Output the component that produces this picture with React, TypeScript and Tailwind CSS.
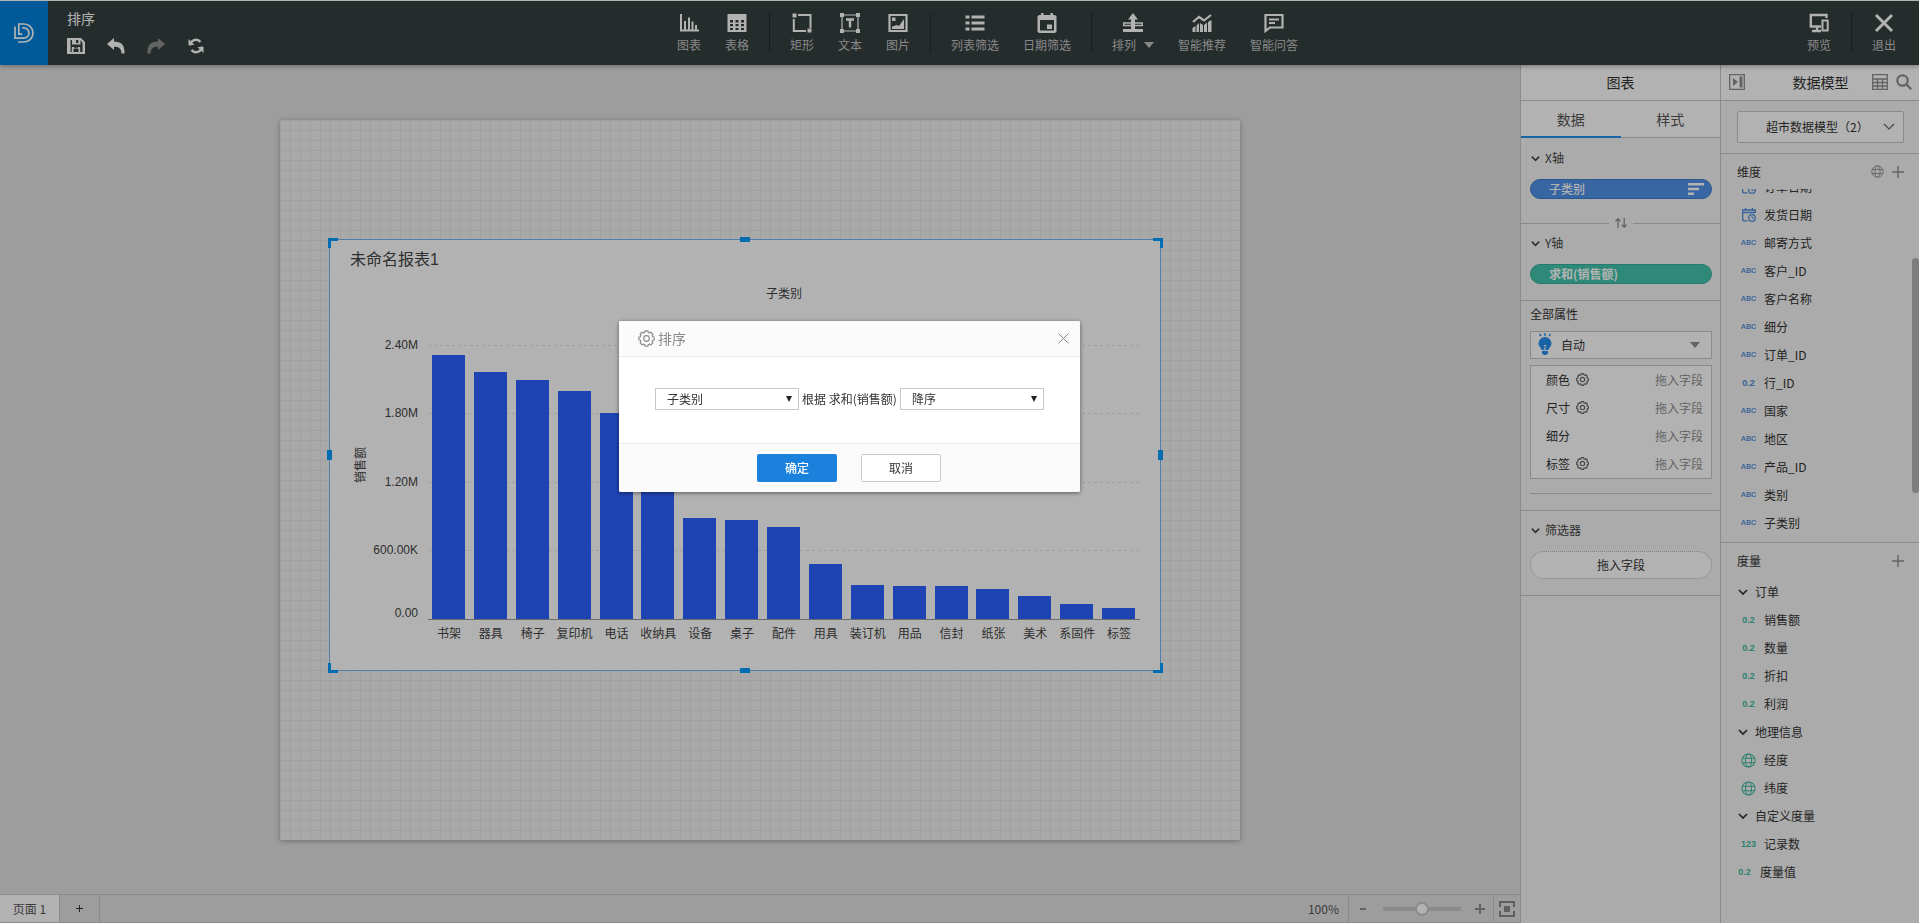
import { useState, type ReactNode } from "react";

const dimensions = [
  { type: "date", label: "订单日期" },
  { type: "date", label: "发货日期" },
  { type: "abc", label: "邮寄方式" },
  { type: "abc", label: "客户_ID" },
  { type: "abc", label: "客户名称" },
  { type: "abc", label: "细分" },
  { type: "abc", label: "订单_ID" },
  { type: "decimal", label: "行_ID" },
  { type: "abc", label: "国家" },
  { type: "abc", label: "地区" },
  { type: "abc", label: "产品_ID" },
  { type: "abc", label: "类别" },
  { type: "abc", label: "子类别" },
];

const measureGroups = [
  {
    title: "订单",
    items: [
      { type: "decimal", label: "销售额" },
      { type: "decimal", label: "数量" },
      { type: "decimal", label: "折扣" },
      { type: "decimal", label: "利润" },
    ],
  },
  {
    title: "地理信息",
    items: [
      { type: "geo", label: "经度" },
      { type: "geo", label: "纬度" },
    ],
  },
  { title: "自定义度量", items: [{ type: "int", label: "记录数" }] },
];

const markFields = [
  { label: "颜色", gear: true },
  { label: "尺寸", gear: true },
  { label: "细分", gear: false },
  { label: "标签", gear: true },
];

/** Bar heights in plot pixels, 600K is 69px. */
const bars = [
  { label: "书架", h: 264 },
  { label: "器具", h: 247 },
  { label: "椅子", h: 239 },
  { label: "复印机", h: 228 },
  { label: "电话", h: 206 },
  { label: "收纳具", h: 170 },
  { label: "设备", h: 101 },
  { label: "桌子", h: 99 },
  { label: "配件", h: 92 },
  { label: "用具", h: 55 },
  { label: "装订机", h: 34 },
  { label: "用品", h: 33 },
  { label: "信封", h: 33 },
  { label: "纸张", h: 30 },
  { label: "美术", h: 23 },
  { label: "系固件", h: 15 },
  { label: "标签", h: 11 },
];

const yTicks = [
  { label: "2.40M", y: 105 },
  { label: "1.80M", y: 173 },
  { label: "1.20M", y: 242 },
  { label: "600.00K", y: 310 },
];

/* eight-toothed gear outline on a 24px grid */
const gearPoints = Array.from({ length: 8 }, (_, i) =>
  [
    [-16, 9],
    [-11, 11],
    [11, 11],
    [16, 9],
  ].map(([deg, r]) => {
    const a = ((i * 45 + deg) * Math.PI) / 180;
    return `${(12 + r * Math.sin(a)).toFixed(2)},${(12 - r * Math.cos(a)).toFixed(2)}`;
  })
)
  .flat()
  .join(" ");

function Gear({ className, thin }: { className: string; thin?: boolean }) {
  return (
    <svg
      className={className}
      viewBox="0 0 24 24"
      fill="none"
      stroke="currentColor"
      strokeWidth={thin ? 1.6 : 2}
      strokeLinejoin="round"
      aria-hidden="true"
    >
      <polygon points={gearPoints} />
      <circle cx="12" cy="12" r="4" />
    </svg>
  );
}

function Chevron({ className }: { className: string }) {
  return (
    <svg className={className} viewBox="0 0 12 12" fill="none" stroke="currentColor" strokeWidth={1.7} aria-hidden="true">
      <path d="M2 4l4 4 4-4" />
    </svg>
  );
}

function Globe({ className }: { className: string }) {
  return (
    <svg className={className} viewBox="0 0 16 16" fill="none" stroke="currentColor" strokeWidth={1.1} aria-hidden="true">
      <circle cx="8" cy="8" r="7" />
      <ellipse cx="8" cy="8" rx="3.2" ry="7" />
      <path d="M1.6 5.5h12.8M1.6 10.5h12.8" />
    </svg>
  );
}

function Plus({ className }: { className: string }) {
  return (
    <svg className={className} viewBox="0 0 12 12" stroke="currentColor" strokeWidth={1.4} aria-hidden="true">
      <path d="M6 0v12M0 6h12" />
    </svg>
  );
}

function ToolIcon({ children }: { children: ReactNode }) {
  return (
    <svg className="size-5 text-white" viewBox="0 0 20 20" fill="none" stroke="currentColor" strokeWidth={2} aria-hidden="true">
      {children}
    </svg>
  );
}

function Tool({ label, caret, children }: { label: string; caret?: boolean; children: ReactNode }) {
  return (
    <button type="button" className="flex flex-col items-center gap-1 px-3 text-xs leading-4 text-[#c4c4c4]">
      <ToolIcon>{children}</ToolIcon>
      <span className="flex items-center gap-2 whitespace-nowrap">
        {label}
        {caret && (
          <svg className="h-1.5 w-2.5" viewBox="0 0 10 6" fill="currentColor" aria-hidden="true">
            <path d="M0 0h10L5 6z" />
          </svg>
        )}
      </span>
    </button>
  );
}

function Divider() {
  return <span className="mx-2 h-10 w-px bg-[#252c2c]" />;
}

function Header() {
  return (
    <header className="relative z-10 flex h-[65px] shrink-0 items-stretch border-t border-white bg-[#363f3f] shadow-[0_1px_5px_rgba(0,0,0,0.35)]">
      <a href="#home" aria-label="首页" className="mr-2 flex w-12 shrink-0 items-center justify-center bg-[#0081dc] text-white">
        <svg className="size-5" viewBox="0 0 20 20" fill="none" stroke="currentColor" strokeWidth={1.7} aria-hidden="true">
          <path d="M1 3.5V15.2h8.8a5.200 5.200 0 0 0 0-10.400H8.2" />
          <path d="M8.2 11.2H4.8V1h5.200a9 9 0 0 1 0 18H4" />
        </svg>
      </a>

      <div className="flex-1 pl-[11px] pt-[7px] text-white">
        <h1 className="text-sm leading-5">排序</h1>
        <div className="mt-[9px] flex items-center gap-[22px]">
          <button type="button" aria-label="保存">
            <svg className="size-[18px]" viewBox="0 0 18 18" fill="currentColor" fillRule="evenodd" aria-hidden="true">
              <path d="M0 1h14l4 4v12H0zM3.5 3v12h1.300v-5h8.400v5h2.300V6L13.5 3v4.600H5V3zM7 10.200v1.300h4v-1.300zM6.5 12v3h5v-3zM9 3h2.300v3H9z" />
            </svg>
          </button>
          <button type="button" aria-label="撤销">
            <svg className="size-[18px]" viewBox="0 0 18 18" fill="currentColor" aria-hidden="true">
              <path d="M0 7l7-6v3.500c7 0 11 3.500 10.500 12h-3C14.5 11.500 12 9.700 7 9.700V13z" />
            </svg>
          </button>
          <button type="button" aria-label="重做" className="text-[#8f8f8f]">
            <svg className="size-[18px]" viewBox="0 0 18 18" fill="currentColor" aria-hidden="true">
              <path d="M18 7l-7-6v3.500C4 4.500 0 8 .5 16.500h3C3.5 11.500 6 9.700 11 9.700V13z" />
            </svg>
          </button>
          <button type="button" aria-label="刷新">
            <svg className="size-[18px]" viewBox="0 0 18 18" fill="none" stroke="currentColor" strokeWidth={2.4} aria-hidden="true">
              <path d="M3.2 8.500A5.800 5.800 0 0 1 13.5 5M14.8 9.500A5.800 5.800 0 0 1 4.5 13" />
              <path d="M1.5 2v6H7.500zM16.500 16v-6H10.500z" fill="currentColor" stroke="none" />
            </svg>
          </button>
        </div>
      </div>

      <nav aria-label="工具栏" className="flex items-center">
        <Tool label="图表">
          <path d="M2 1v16.500h18M6 17V8M10 17V4.500M13.500 17V8.500M17 17v-5" />
        </Tool>
        <Tool label="表格">
          <path
            fill="currentColor"
            fillRule="evenodd"
            stroke="none"
            d="M0.5 1h19v18h-19zM3 7v2.500h3V7zM8.5 7v2.500h3V7zM14 7v2.500h3V7zM3 11v2.300h3V11zM8.5 11v2.300h3V11zM14 11v2.300h3V11zM3 15v2h3v-2zM8.5 15v2h3v-2zM14 15v2h3v-2z"
          />
        </Tool>
        <Divider />
        <Tool label="矩形">
          <path d="M6 2h12.500v13M14 18H1.800V6" />
          <path d="M0.5 0.500h4v4h-4zM15.500 15.500h4v4h-4z" fill="currentColor" stroke="none" />
        </Tool>
        <Tool label="文本">
          <path d="M2 2h16v16H2z" strokeWidth={1.2} />
          <path d="M0 0h4v4H0zM16 0h4v4h-4zM0 16h4v4H0zM16 16h4v4h-4z" fill="currentColor" stroke="none" />
          <path d="M6 6.500h8M10 6v8.500" strokeWidth={2.4} />
        </Tool>
        <Tool label="图片">
          <path d="M1.5 2h17v16h-17z" strokeWidth={2.2} />
          <path d="M4 4.500h3.500V8H4zM4 16v-2.500l5-1.500 2 1 5-7V16z" fill="currentColor" stroke="none" />
        </Tool>
        <Divider />
        <Tool label="列表筛选">
          <path d="M0.5 4h4M6.500 4h13M0.500 10h4M6.500 10h13M0.500 16h4M6.500 16h13" strokeWidth={3} />
        </Tool>
        <Tool label="日期筛选">
          <path
            fill="currentColor"
            fillRule="evenodd"
            stroke="none"
            d="M4 0h2.500v2h7V0H16v2h2l1.500 1.500v15L18 20H2L.5 18.500v-15L2 2h2zM3 7v10.500h14V7zM10 11.500h5v4.500h-5z"
          />
        </Tool>
        <Divider />
        <Tool label="排列" caret>
          <path d="M10 0l5 6.500h-3V16H8V6.500H5zM0 16h20v3H0z" fill="currentColor" stroke="none" />
          <path d="M8 10H.7v2.500H8M12 10h7.300v2.500H12" strokeWidth={1.4} />
        </Tool>
        <Tool label="智能推荐">
          <path d="M1 9l6-5 5 3.500L19 2" strokeWidth={2.2} />
          <path d="M.5 19v-4l3-2v6zM4.5 19v-6.500L7 10v9zM8 19v-9l3 2v7zM12 19v-7l3-2.500V19zM16 19v-10l3.500-2v12z" fill="currentColor" stroke="none" />
        </Tool>
        <Tool label="智能问答">
          <path d="M1.5 2h17v12.500H6L1.5 18z" strokeWidth={2.2} />
          <path d="M5 6.500h10M5 10h6" />
        </Tool>
      </nav>

      <div className="flex flex-1 items-center justify-end pr-[11px]">
        <Tool label="预览">
          <path d="M17.5 5V2H1.800v11.500H12M8 14v4M3 18h9" strokeWidth={2.4} />
          <path d="M13.5 7.500h5.200v10h-5.200z" />
        </Tool>
        <Divider />
        <Tool label="退出">
          <path d="M2 2l16 16M18 2L2 18" strokeWidth={3} />
        </Tool>
      </div>
    </header>
  );
}

function Chart() {
  const step = 712 / bars.length;
  return (
    <svg className="block h-[430px] w-[830px]" viewBox="0 0 830 430" role="img" aria-label="子类别销售额柱状图">
      <g className="fill-[#444] font-['Liberation_Sans','Noto_Sans_CJK_SC',sans-serif] text-[12px]">
        <text x="20" y="25" className="text-[16px]">
          未命名报表1
        </text>
        <text x="454" y="58" textAnchor="middle">
          子类别
        </text>
        {yTicks.map((t) => (
          <g key={t.label}>
            <line x1="98" x2="810" y1={t.y + 0.5} y2={t.y + 0.5} stroke="#e2e2e2" strokeDasharray="3 3" />
            <text x="88" y={t.y + 4} textAnchor="end">
              {t.label}
            </text>
          </g>
        ))}
        <text x="88" y="377" textAnchor="end">
          0.00
        </text>
        <text transform="translate(35 225) rotate(-90)" textAnchor="middle">
          销售额
        </text>
        {bars.map((b, i) => (
          <g key={b.label}>
            <rect
              x={Math.round(98 + i * step + 4)}
              y={379 - b.h}
              width={33}
              height={b.h}
              className="fill-[#2b60ff]"
            />
            <text x={98 + (i + 0.5) * step} y="398" textAnchor="middle">
              {b.label}
            </text>
          </g>
        ))}
      </g>
      <line x1="98" x2="810" y1="379.5" y2="379.5" stroke="#9a9a9a" />
    </svg>
  );
}

function Canvas() {
  return (
    <div className="flex flex-1 items-center justify-center overflow-hidden pt-px">
      <div className="relative h-[720px] w-[960px] shrink-0 bg-[#f3f3f3] bg-[linear-gradient(to_right,#e6e6e6_1px,transparent_1px),linear-gradient(to_bottom,#e6e6e6_1px,transparent_1px)] bg-[size:10px_10px] shadow-[0_1px_5px_rgba(0,0,0,0.3)]">
        <section className="absolute left-[49px] top-[119px] border border-[#74b3f5] bg-white">
          <Chart />
          {/* resize handles */}
          <span className="absolute -left-0.5 -top-0.5 size-2.5 border-l-3 border-t-3 border-[#009dff]" />
          <span className="absolute -right-[3px] -top-0.5 size-2.5 border-r-3 border-t-3 border-[#009dff]" />
          <span className="absolute -bottom-[3px] -left-0.5 size-2.5 border-b-3 border-l-3 border-[#009dff]" />
          <span className="absolute -bottom-[3px] -right-[3px] size-2.5 border-b-3 border-r-3 border-[#009dff]" />
          <span className="absolute -top-[3px] left-1/2 h-[5px] w-2.5 -translate-x-1/2 bg-[#009dff]" />
          <span className="absolute -bottom-[3px] left-1/2 h-[5px] w-2.5 -translate-x-1/2 bg-[#009dff]" />
          <span className="absolute -left-[3px] top-1/2 h-2.5 w-[5px] -translate-y-1/2 bg-[#009dff]" />
          <span className="absolute -right-[3px] top-1/2 h-2.5 w-[5px] -translate-y-1/2 bg-[#009dff]" />
        </section>
      </div>
    </div>
  );
}

function PageBar() {
  const [zoom, setZoom] = useState(100);
  return (
    <footer className="flex h-[29px] shrink-0 items-stretch border-y border-[#c8c8c8] text-xs text-[#555]">
      <button type="button" className="w-[60px] border-r border-[#c8c8c8] bg-white">
        页面 1
      </button>
      <button type="button" aria-label="新增页面" className="flex w-10 items-center justify-center border-r border-[#c8c8c8] text-[#333]">
        <svg className="size-[7px]" viewBox="0 0 7 7" stroke="currentColor" aria-hidden="true">
          <path d="M3.5 0v7M0 3.500h7" />
        </svg>
      </button>
      <span className="ml-auto flex items-center pr-[9px]">{zoom}%</span>
      <div className="flex w-[145px] items-center justify-between border-l border-[#c8c8c8] px-2 text-[#8f8f8f]">
        <button type="button" aria-label="缩小" className="flex size-3 items-center justify-center" onClick={() => setZoom(Math.max(10, zoom - 10))}>
          <span className="h-0.5 w-1.5 bg-[#8f8f8f]" />
        </button>
        <input
          type="range"
          aria-label="缩放"
          min={10}
          max={190}
          value={zoom}
          onChange={(e) => setZoom(Number(e.target.value))}
          className="h-1 w-[78px] appearance-none bg-[#c8c8c8] [&::-webkit-slider-thumb]:size-3.5 [&::-webkit-slider-thumb]:appearance-none [&::-webkit-slider-thumb]:rounded-full [&::-webkit-slider-thumb]:border-2 [&::-webkit-slider-thumb]:border-[#c8c8c8] [&::-webkit-slider-thumb]:bg-white"
        />
        <button type="button" aria-label="放大" onClick={() => setZoom(Math.min(190, zoom + 10))}>
          <svg className="size-2.5" viewBox="0 0 10 10" stroke="currentColor" strokeWidth={2} aria-hidden="true">
            <path d="M5 0v10M0 5h10" />
          </svg>
        </button>
      </div>
      <button type="button" aria-label="适应屏幕" className="flex w-[27px] items-center justify-center border-l border-[#c8c8c8] text-[#8a8a8a]">
        <svg className="size-4" viewBox="0 0 16 16" fill="none" stroke="currentColor" strokeWidth={2} aria-hidden="true">
          <path d="M1 6V1h14v5M1 10v5h14v-5" />
          <path d="M5 5h6v6H5z" fill="currentColor" stroke="none" />
        </svg>
      </button>
    </footer>
  );
}

function SectionLabel({ children }: { children: ReactNode }) {
  return (
    <button type="button" className="flex h-5 items-center gap-1 text-xs text-[#444]">
      <Chevron className="size-[11px]" />
      {children}
    </button>
  );
}

function ChartPanel() {
  return (
    <aside className="w-[200px] shrink-0 border-l border-[#c8c8c8] bg-[#f5f5f5] text-xs text-[#333]">
      <h2 className="flex h-9 items-center justify-center border-b border-[#c8c8c8] bg-white pb-px text-sm">图表</h2>
      <div className="flex h-[37px] border-b border-[#c8c8c8] bg-white text-sm text-[#555]">
        <button type="button" className="-mb-px flex-1 border-b-2 border-[#258ff0]">
          数据
        </button>
        <button type="button" className="flex-1 border-b border-transparent">
          样式
        </button>
      </div>

      <div className="border-b border-[#c8c8c8] pb-4 pt-2.5">
        <div className="pl-[9px] pr-2">
          <SectionLabel>X轴</SectionLabel>
          <div className="mt-[11px] flex h-5 items-center justify-between rounded-full border border-[#3f7fd0] bg-[#4f92e9] pl-[18px] pr-[7px] font-medium text-white">
            子类别
            <svg className="h-3 w-4" viewBox="0 0 16 12" stroke="currentColor" strokeWidth={2.6} aria-hidden="true">
              <path d="M0 1.300h16M0 6h11M0 10.700h6" />
            </svg>
          </div>
        </div>
        <div className="mt-4 flex h-4 items-center gap-1.5">
          <span className="h-px flex-1 bg-[#c8c8c8]" />
          <button type="button" aria-label="交换坐标轴" className="text-[#8f8f8f]">
            <svg className="h-2.5 w-3" viewBox="0 0 12 10" fill="none" stroke="currentColor" strokeWidth={1.3} aria-hidden="true">
              <path d="M3 10V.8M.5 3.300L3 .8l2.500 2.500M9.200 0v9.200M6.700 6.700l2.500 2.500 2.500-2.500" />
            </svg>
          </button>
          <span className="h-px flex-1 bg-[#c8c8c8]" />
        </div>
        <div className="mt-0.5 pl-[9px] pr-2">
          <SectionLabel>Y轴</SectionLabel>
          <div className="mt-[11px] flex h-5 items-center rounded-full border border-[#38b09b] bg-[#42c4ad] pl-[18px] font-bold text-white">
            求和(销售额)
          </div>
        </div>
      </div>

      <div className="border-b border-[#c8c8c8] pb-4 pl-[9px] pr-2 pt-[3px]">
        <label htmlFor="mark-type" className="block leading-5">
          全部属性
        </label>
        <div className="relative mt-[7px]">
          <svg className="pointer-events-none absolute left-2 top-0.5 h-[22px] w-3.5 text-[#258ff0]" viewBox="0 0 14 22" fill="currentColor" aria-hidden="true">
            <path d="M7 4a6.500 6.500 0 0 1 6.500 6.500c0 3-2.800 4-3 6.500h-7c-.2-2.500-3-3.500-3-6.500A6.500 6.500 0 0 1 7 4zM4 18h6v3H8.500v1h-3v-1H4z" />
            <path d="M7 0v3M1.500 1l1.500 2M12.500 1L11 3" stroke="currentColor" strokeWidth={1.4} />
            <path d="M7 17v-3.500M5.800 12.500h2.400" stroke="#fff" strokeWidth={1} />
          </svg>
          <select id="mark-type" className="block h-7 w-full appearance-none border border-[#c8c8c8] bg-white pl-[30px]">
            <option>自动</option>
          </select>
          <svg className="pointer-events-none absolute right-3 top-[11px] h-1.5 w-2.5 text-[#8f8f8f]" viewBox="0 0 10 6" fill="currentColor" aria-hidden="true">
            <path d="M0 0h10L5 6z" />
          </svg>
        </div>
        <ul className="mt-1.5 border border-[#c8c8c8] bg-white">
          {markFields.map((f) => (
            <li key={f.label} className="flex h-7 items-center pb-px pl-[15px] pr-2">
              {f.label}
              {f.gear && (
                <button type="button" aria-label={`${f.label}设置`} className="ml-1.5 text-[#666]">
                  <Gear className="size-[13px]" />
                </button>
              )}
              <span className="ml-auto text-[#8f8f8f]">拖入字段</span>
            </li>
          ))}
        </ul>
        <hr className="mt-3.5 border-[#c8c8c8]" />
      </div>

      <div className="border-b border-[#c8c8c8] pb-4 pl-[9px] pr-2 pt-[9px]">
        <SectionLabel>筛选器</SectionLabel>
        <div className="mt-[11px] flex h-7 items-center justify-center rounded-full border border-dotted border-[#b5b5b5] bg-white">
          拖入字段
        </div>
      </div>
    </aside>
  );
}

function FieldIcon({ type }: { type: string }) {
  if (type === "geo") return <Globe className="size-[15px]" />;
  if (type === "date") {
    return (
      <svg className="size-3.5" viewBox="0 0 14 14" fill="none" stroke="currentColor" strokeWidth={1.3} aria-hidden="true">
        <path d="M5.5 12.800H1.500l-.8-.8V2h12.600v3M.7 4.500h12.600M3.500 0v3M10.500 0v3" />
        <circle cx="10" cy="10" r="3.300" />
        <path d="M10 8v2.200h1.800" strokeWidth={1} />
      </svg>
    );
  }
  if (type === "abc") return <span className="font-['Roboto',sans-serif] text-[8px] font-medium">ABC</span>;
  if (type === "int") return <span className="font-['Liberation_Sans',sans-serif] text-[9px] font-bold">123</span>;
  return <span className="font-['Liberation_Sans',sans-serif] text-[9px] font-bold">0.2</span>;
}

function Field({ type, label, measure }: { type: string; label: string; measure?: boolean }) {
  return (
    <li className="flex h-7 items-center gap-1">
      <span className={`flex w-[23px] justify-center ${measure ? "text-[#42b89f]" : "text-[#4f8fdb]"}`}>
        <FieldIcon type={type} />
      </span>
      {label}
    </li>
  );
}

function ModelPanel() {
  return (
    <aside className="w-[199px] shrink-0 border-l border-[#c8c8c8] bg-[#f5f5f5] text-xs text-[#333]">
      <div className="flex h-9 items-center border-b border-[#c8c8c8] bg-white pb-px pl-2 pr-[7px] text-[#8f8f8f]">
        <button type="button" aria-label="收起面板">
          <svg className="size-4" viewBox="0 0 16 16" fill="none" stroke="currentColor" strokeWidth={1.3} aria-hidden="true">
            <path d="M.7.7h14.600v14.600H.7z" />
            <path d="M4 4l5 4-5 4zM10.500 2.500h3v11h-3z" fill="currentColor" stroke="none" />
          </svg>
        </button>
        <h2 className="flex-1 pl-6 text-center text-sm text-[#333]">数据模型</h2>
        <button type="button" aria-label="查看数据" className="mr-2">
          <svg className="size-4" viewBox="0 0 16 16" fill="none" stroke="currentColor" strokeWidth={1.3} aria-hidden="true">
            <path d="M.7.7h14.600v14.600H.7zM.7 5h14.600M.7 8.500h14.600M.7 12h14.600M5.500 5v10M10.500 5v10" />
          </svg>
        </button>
        <button type="button" aria-label="搜索">
          <svg className="size-4" viewBox="0 0 16 16" fill="none" stroke="currentColor" strokeWidth={2.2} aria-hidden="true">
            <circle cx="6.5" cy="6.500" r="5.200" />
            <path d="M10.3 10.300l5 5" />
          </svg>
        </button>
      </div>

      <div className="relative border-b border-[#c8c8c8] pb-2.5 pl-4 pr-[15px] pt-2.5">
        <select aria-label="数据模型" className="block h-8 w-full appearance-none rounded-xs border border-[#c8c8c8] bg-white pl-7">
          <option>超市数据模型（2）</option>
        </select>
        <svg className="pointer-events-none absolute right-6 top-[22px] h-2 w-3 text-[#666]" viewBox="0 0 12 8" fill="none" stroke="currentColor" strokeWidth={1.2} aria-hidden="true">
          <path d="M1 1l5 5 5-5" />
        </svg>
      </div>

      <section className="relative h-[389px] overflow-hidden border-b border-[#c8c8c8]">
        <div className="flex h-[35px] items-center gap-2 pl-4 pr-[15px] text-[#8f8f8f]">
          <h3 className="mr-auto text-[#333]">维度</h3>
          <Globe className="size-[13px]" />
          <button type="button" aria-label="新增维度">
            <Plus className="size-3" />
          </button>
        </div>
        <div className="overflow-hidden">
          <ul className="-mt-4 pl-4">
            {dimensions.map((d) => (
              <Field key={d.label} {...d} />
            ))}
          </ul>
        </div>
        {/* list scrollbar */}
        <span className="absolute right-0 top-[104px] h-[235px] w-[7px] rounded-full bg-[#b4b4b4]" />
      </section>

      <section>
        <div className="flex h-[35px] items-center justify-between pl-4 pr-[15px] text-[#8f8f8f]">
          <h3 className="text-[#333]">度量</h3>
          <button type="button" aria-label="新增度量">
            <Plus className="size-3" />
          </button>
        </div>
        {measureGroups.map((g) => (
          <div key={g.title} className="pl-4">
            <button type="button" className="flex h-7 items-center gap-1.5">
              <Chevron className="size-3" />
              {g.title}
            </button>
            <ul>
              {g.items.map((m) => (
                <Field key={m.label} {...m} measure />
              ))}
            </ul>
          </div>
        ))}
        <ul className="pl-3">
          <Field type="decimal" label="度量值" measure />
        </ul>
      </section>
    </aside>
  );
}

function DialogSelect({ label, options }: { label: string; options: string[] }) {
  return (
    <div className="relative">
      <select aria-label={label} className="block h-[22px] w-36 appearance-none border border-[#c8c8c8] bg-white pl-[11px]">
        {options.map((o) => (
          <option key={o}>{o}</option>
        ))}
      </select>
      <svg className="pointer-events-none absolute right-[7px] top-2 h-1.5 w-1.5" viewBox="0 0 6 6" fill="#222" aria-hidden="true">
        <path d="M0 0h6L3 6z" />
      </svg>
    </div>
  );
}

function SortDialog() {
  return (
    <div className="fixed inset-0 z-20 flex items-center justify-center bg-black/30 pb-[110px] pr-[220px]">
      <div role="dialog" aria-label="排序" className="w-[461px] rounded-xs bg-white text-xs text-[#333] shadow-[0_1px_4px_rgba(0,0,0,0.5)]">
        <div className="flex h-9 items-center rounded-t-xs border-b border-[#ebebeb] bg-[#fbfbfb] pl-[19px] pr-[11px] text-[#8a8a8a]">
          <Gear className="size-[17px]" thin />
          <h2 className="ml-[3px] pb-px text-sm">排序</h2>
          <button type="button" aria-label="关闭" className="ml-auto">
            <svg className="size-[11px]" viewBox="0 0 11 11" stroke="currentColor" aria-hidden="true">
              <path d="M.5.500l10 10M10.500.500l-10 10" />
            </svg>
          </button>
        </div>
        <div className="flex h-[87px] items-center justify-center gap-[3px] border-b border-[#ebebeb] pb-0.5">
          <DialogSelect label="排序字段" options={["子类别"]} />
          <span className="whitespace-nowrap">根据 求和(销售额)</span>
          <DialogSelect label="排序方式" options={["降序", "升序"]} />
        </div>
        <div className="flex h-12 items-center justify-center gap-6 rounded-b-xs bg-[#fbfbfb] pr-px">
          <button type="button" className="h-7 w-20 rounded-xs bg-[#1a82dc] font-medium text-white">
            确定
          </button>
          <button type="button" className="h-7 w-20 rounded-xs border border-[#c8c8c8] bg-white">
            取消
          </button>
        </div>
      </div>
    </div>
  );
}

export default function App() {
  return (
    <div className="flex h-screen flex-col overflow-hidden bg-[#e1e1e1] font-['Noto_Sans_CJK_SC','Noto_Sans',sans-serif]">
      <Header />
      <div className="flex min-h-0 flex-1">
        <main className="flex min-w-0 flex-1 flex-col">
          <Canvas />
          <PageBar />
        </main>
        <ChartPanel />
        <ModelPanel />
      </div>
      <SortDialog />
    </div>
  );
}
